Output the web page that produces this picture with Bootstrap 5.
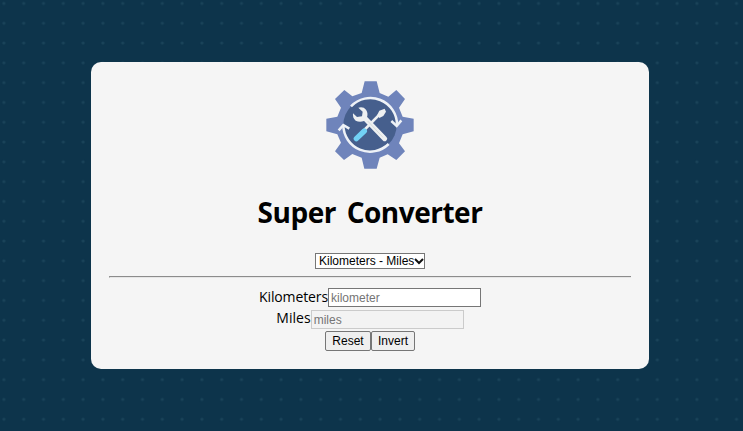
<!DOCTYPE html>
<html lang="en">
<head>
<meta charset="utf-8">
<meta name="viewport" content="width=device-width, initial-scale=1">
<title>Super Converter</title>
<link href="https://cdn.jsdelivr.net/npm/bootstrap@5.3.0/dist/css/bootstrap.min.css" rel="stylesheet">
<style>
body{background:#0d344b;font-family:"Open Sans","Noto Sans",sans-serif;color:#000;overflow:hidden}
.dots{display:block;position:fixed;inset:0;width:100%;height:100%;z-index:-1}
.panel{width:558px;height:307px;margin:62px 0 0 91px;padding:13px 18px 0;background:#f5f5f5;border-radius:10px}
.logo{width:100px;height:100px;flex:none}
.title{font-size:28px;font-weight:700;line-height:38px;margin:18px 0 0;white-space:nowrap;letter-spacing:-.5px;word-spacing:4px}
.picker{width:110px;height:16px;margin-top:22px;border:1px solid #767676;background:#fff;padding:0 0 0 3px;font:12px/14px "Liberation Sans",Arial,sans-serif;white-space:nowrap}
.picker select{appearance:none;border:0;background:none;padding:0;width:95px;height:14px;font:inherit;color:#000;flex:none}
.picker svg{flex:none;width:10px;height:14px}
.rule{width:522px;height:2px;margin:7px 0 10px;border-top:1px solid #8c8c8c;border-bottom:1px solid #e6e6e6;border-left:1px solid #999}
.line{height:19px;margin-bottom:3px}
.line+.line{margin-bottom:2px}
.line label{font-size:14px;line-height:17px;padding-bottom:2px;letter-spacing:-.12px;white-space:nowrap}
.line+.line label{padding-bottom:4px;letter-spacing:.04px}
.line input{width:153px;height:19px;border:1px solid #767676;padding:0 2px;font:12px "Liberation Sans",Arial,sans-serif;background:#fff;border-radius:0}
.line input::placeholder{color:#757575;opacity:1}
.line input:disabled{background:#f3f3f3;border-color:#cbcbcb}
.key{height:20px;border:1px solid #767676;border-radius:2px;background:#efefef;padding:0;font:12px "Liberation Sans",Arial,sans-serif;color:#000}
.key-reset{width:46px}.key-invert{width:44px}
</style>
</head>
<body>
<svg class="dots" aria-hidden="true"><defs><pattern id="grid" x="-6" y="-6.5" width="19.8" height="19.8" patternUnits="userSpaceOnUse"><circle cx="9.9" cy="9.9" r="1.6" fill="#1a4359"/></pattern></defs><rect width="100%" height="100%" fill="url(#grid)"/></svg>
<main class="panel d-flex flex-column align-items-center">
<svg class="logo" viewBox="0 0 300 300" aria-hidden="true">
<path fill="#6f84bb" d="M134 19H170L179 54L205 65L229 45L255 72L237 98L248 125L281 131V169L248 178L237 205L255 229L229 255L203 238L179 248L170 281H133L125 248L97 237L72 255L45 229L63 203L52 178L19 169V131L52 125L63 98L45 72L73 45L97 64L125 54Z"/>
<circle cx="150" cy="150" r="80" fill="#465f8d"/>
<g fill="none" stroke="#eef2f7" stroke-width="7.5"><path d="M93 94A80 80 0 0 1 231 150M206 207A80 80 0 0 1 70 151"/><path d="M214 138L230 153L244 136M56 166L70 150L88 161"/></g>
<path d="M124 174L178 119" stroke="#eef0f1" stroke-width="8"/>
<path fill="#eef0f1" d="M172 119L178 107L194 101L198 110L190 123L178 129Z"/>
<path d="M109 191L133 168" stroke="#72d1f5" stroke-width="16" stroke-linecap="round"/>
<path d="M134 129L194 191" stroke="#eef0f1" stroke-width="15" stroke-linecap="round"/>
<path d="M143 138L189 187" stroke="#d8dcda" stroke-width="3"/>
<path fill="#eef0f1" d="M115 98Q130 94 138 104Q145 114 141 127L132 138Q119 143 107 137Q97 129 99 115L111 126L126 124L128 110Z"/>
</svg>
<h1 class="title">Super Converter</h1>
<div class="picker d-flex align-items-center"><select aria-label="Conversion units"><option>Kilometers - Miles</option></select><svg viewBox="0 0 10 14" aria-hidden="true"><path d="M1 5L5 9L9 5" fill="none" stroke="#111" stroke-width="2"/></svg></div>
<div class="rule"></div>
<div class="line d-flex align-items-center"><label for="km">Kilometers</label><input id="km" placeholder="kilometer"></div>
<div class="line d-flex align-items-center"><label for="mi">Miles</label><input id="mi" placeholder="miles" disabled></div>
<div class="d-flex"><button class="key key-reset" type="button">Reset</button><button class="key key-invert" type="button">Invert</button></div>
</main>
<script src="https://cdn.jsdelivr.net/npm/bootstrap@5.3.0/dist/js/bootstrap.bundle.min.js"></script>
</body>
</html>
